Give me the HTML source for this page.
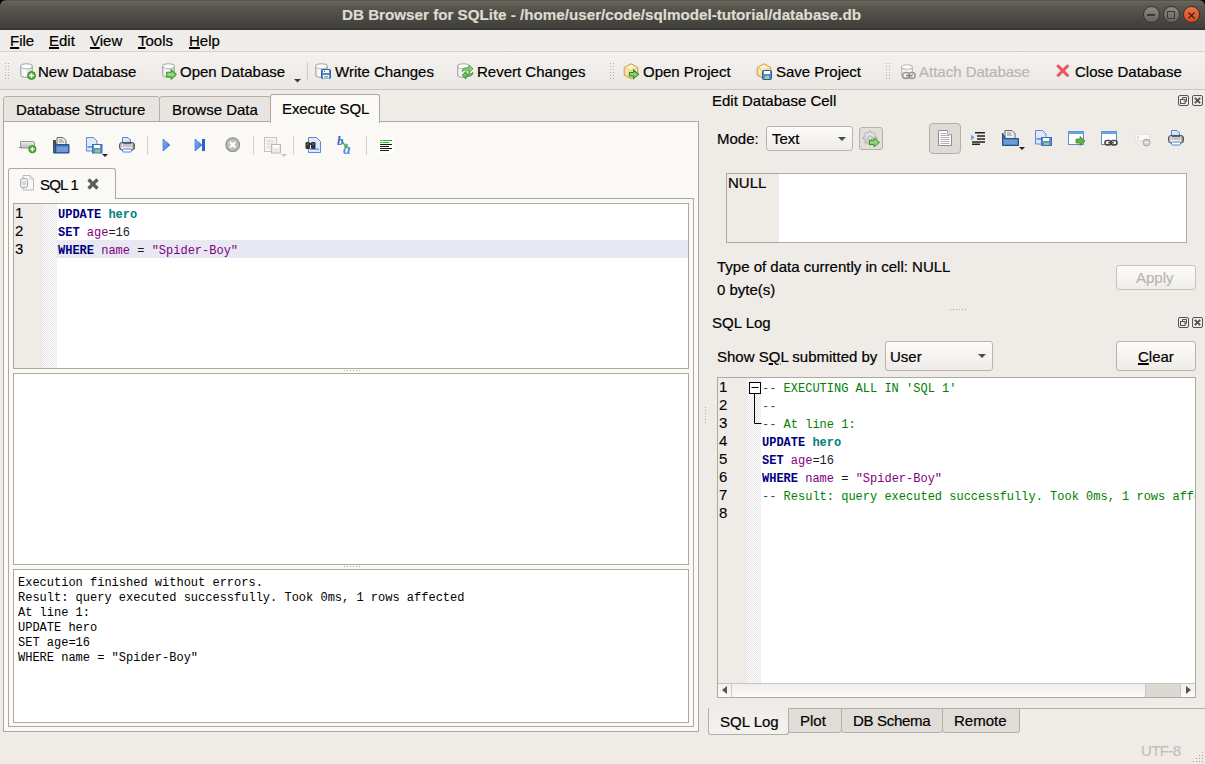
<!DOCTYPE html>
<html><head><meta charset="utf-8">
<style>
*{box-sizing:border-box;margin:0;padding:0}
html,body{width:1205px;height:764px;overflow:hidden;background:#000}
body{position:relative;font-family:"Liberation Sans",sans-serif;font-size:15px;color:#1a1a1a}
.a{position:absolute}
.t{position:absolute;white-space:pre;line-height:15px;font-size:15px;color:#000;-webkit-text-stroke:0.2px currentColor}
.m{position:absolute;white-space:pre;font-family:"Liberation Mono",monospace;font-size:12px;line-height:18px}
.u{text-decoration:underline;text-decoration-thickness:2px;text-underline-offset:1px}
.k{color:#00007f;font-weight:bold}
.tb{color:#007f7f;font-weight:bold}
.id{color:#7f007f}
.s{color:#7f007f}
.c{color:#007f00}
svg{position:absolute;overflow:visible}
</style></head><body>

<!-- title bar -->
<div class="a" style="left:0;top:0;width:1205px;height:30px;background:linear-gradient(#55534b 0,#55534b 1px,#6b685e 1px,#625f56 3px,#57554d 8px,#3f3e3a 28px,#33322e 29px);border-radius:6px 6px 0 0"></div>
<div class="a" style="left:0;top:30px;width:1205px;height:1px;background:#f8f6f3"></div>
<div class="t" style="left:342px;top:7px;color:#dfdbd2;font-weight:bold;font-size:15.2px">DB Browser for SQLite - /home/user/code/sqlmodel-tutorial/database.db</div>
<div class="a" style="left:1143px;top:6px;width:17px;height:17px;border-radius:50%;background:linear-gradient(#8a8984,#65645f);border:1px solid #34332f"></div>
<div class="a" style="left:1147px;top:14px;width:8px;height:2px;background:#3a3935"></div>
<div class="a" style="left:1163px;top:6px;width:17px;height:17px;border-radius:50%;background:linear-gradient(#8a8984,#65645f);border:1px solid #34332f"></div>
<div class="a" style="left:1167px;top:11px;width:8px;height:8px;border:1.5px solid #3a3935"></div>
<div class="a" style="left:1183px;top:6px;width:17px;height:17px;border-radius:50%;background:linear-gradient(#f07444,#d94a1c);border:1px solid #3a2e26"></div>
<svg style="left:1188px;top:12px" width="7" height="7"><path d="M0.5 0.5L6.5 6.5M6.5 0.5L0.5 6.5" stroke="#2a2a20" stroke-width="1.3"/></svg>

<!-- menu bar -->
<div class="a" style="left:0;top:30px;width:1205px;height:21px;background:#efedea"></div>
<div class="a" style="left:0;top:51px;width:1205px;height:1px;background:#d6d2cc"></div>
<div class="t" style="left:10px;top:33px"><span class="u">F</span>ile</div>
<div class="t" style="left:49px;top:33px"><span class="u">E</span>dit</div>
<div class="t" style="left:90px;top:33px"><span class="u">V</span>iew</div>
<div class="t" style="left:138px;top:33px"><span class="u">T</span>ools</div>
<div class="t" style="left:189px;top:33px"><span class="u">H</span>elp</div>

<!-- main toolbar -->
<div class="a" style="left:0;top:52px;width:1205px;height:37px;background:linear-gradient(#f4f2ef,#ebe8e4)"></div>
<div class="a" style="left:0;top:89px;width:1205px;height:1px;background:#c9c5bf"></div>
<div class="a" style="left:0;top:90px;width:1205px;height:1px;background:#f7f5f2"></div>


<!-- toolbar items -->
<svg style="left:5px;top:63px" width="4" height="17"><rect x="0" y="0" width="1" height="1" fill="#b3afa8"/><rect x="0" y="3" width="1" height="1" fill="#b3afa8"/><rect x="0" y="6" width="1" height="1" fill="#b3afa8"/><rect x="0" y="9" width="1" height="1" fill="#b3afa8"/><rect x="0" y="12" width="1" height="1" fill="#b3afa8"/><rect x="0" y="15" width="1" height="1" fill="#b3afa8"/><rect x="3" y="0" width="1" height="1" fill="#b3afa8"/><rect x="3" y="3" width="1" height="1" fill="#b3afa8"/><rect x="3" y="6" width="1" height="1" fill="#b3afa8"/><rect x="3" y="9" width="1" height="1" fill="#b3afa8"/><rect x="3" y="12" width="1" height="1" fill="#b3afa8"/><rect x="3" y="15" width="1" height="1" fill="#b3afa8"/></svg>
<svg style="left:20px;top:63px;opacity:1" width="14" height="15"><defs><linearGradient id="cg20" x1="0" x2="1"><stop offset="0" stop-color="#e8e8e8"/><stop offset=".35" stop-color="#fdfdfd"/><stop offset="1" stop-color="#d4d4d4"/></linearGradient></defs><path d="M.7 3.2v8.6c0 1.5 2.6 2.6 5.8 2.6s5.8-1.1 5.8-2.6V3.2" fill="url(#cg20)" stroke="#a9a9a9" stroke-width="1.1"/><ellipse cx="6.5" cy="3.2" rx="5.8" ry="2.5" fill="#fff" stroke="#a9a9a9" stroke-width="1.1"/><path d="M1.5 4.5c1 1 3 1.5 5 1.5s4-.5 5-1.5" fill="none" stroke="#d0d0d0" stroke-width=".8"/></svg>
<svg style="left:27px;top:71px" width="9" height="9"><circle cx="4.5" cy="4.5" r="3.9" fill="#5bb548" stroke="#2f8a25" stroke-width="1"/><path d="M4.5 2.3v4.4M2.3 4.5h4.4" stroke="#fff" stroke-width="1.4"/></svg>
<div class="t" style="left:38px;top:64px">New Database</div>
<svg style="left:162px;top:63px;opacity:1" width="14" height="15"><defs><linearGradient id="cg162" x1="0" x2="1"><stop offset="0" stop-color="#e8e8e8"/><stop offset=".35" stop-color="#fdfdfd"/><stop offset="1" stop-color="#d4d4d4"/></linearGradient></defs><path d="M.7 3.2v8.6c0 1.5 2.6 2.6 5.8 2.6s5.8-1.1 5.8-2.6V3.2" fill="url(#cg162)" stroke="#a9a9a9" stroke-width="1.1"/><ellipse cx="6.5" cy="3.2" rx="5.8" ry="2.5" fill="#fff" stroke="#a9a9a9" stroke-width="1.1"/><path d="M1.5 4.5c1 1 3 1.5 5 1.5s4-.5 5-1.5" fill="none" stroke="#d0d0d0" stroke-width=".8"/></svg>
<svg style="left:166px;top:69px" width="11" height="11"><path d="M.6 3.3h4.6V.8l5 4.7-5 4.7V7.7H.6z" fill="#9ad486" stroke="#2e9a1e" stroke-width="1.1" stroke-linejoin="round"/></svg>
<div class="t" style="left:180px;top:64px">Open Database</div>
<svg style="left:294px;top:79px" width="7" height="4"><path d="M0 0h7L3.5 3.5z" fill="#3c3c3c"/></svg>
<div class="a" style="left:307px;top:62px;width:1px;height:18px;background:#cfcbc5"></div>
<svg style="left:315px;top:63px;opacity:1" width="14" height="15"><defs><linearGradient id="cg315" x1="0" x2="1"><stop offset="0" stop-color="#e8e8e8"/><stop offset=".35" stop-color="#fdfdfd"/><stop offset="1" stop-color="#d4d4d4"/></linearGradient></defs><path d="M.7 3.2v8.6c0 1.5 2.6 2.6 5.8 2.6s5.8-1.1 5.8-2.6V3.2" fill="url(#cg315)" stroke="#a9a9a9" stroke-width="1.1"/><ellipse cx="6.5" cy="3.2" rx="5.8" ry="2.5" fill="#fff" stroke="#a9a9a9" stroke-width="1.1"/><path d="M1.5 4.5c1 1 3 1.5 5 1.5s4-.5 5-1.5" fill="none" stroke="#d0d0d0" stroke-width=".8"/></svg>
<svg style="left:321px;top:69px" width="10" height="10"><rect x=".5" y=".5" width="9" height="9" rx=".8" fill="#4f84d6" stroke="#2f63b8"/><rect x="2" y="1" width="6" height="3" fill="#fff"/><rect x="3" y="1.5" width="1" height="1.5" fill="#3a6fc8"/><rect x="2" y="6" width="6" height="3.5" fill="#fff"/><rect x="3" y="7" width="4" height="1.6" fill="#7cc83a"/></svg>
<div class="t" style="left:335px;top:64px">Write Changes</div>
<svg style="left:457px;top:63px;opacity:1" width="14" height="15"><defs><linearGradient id="cg457" x1="0" x2="1"><stop offset="0" stop-color="#e8e8e8"/><stop offset=".35" stop-color="#fdfdfd"/><stop offset="1" stop-color="#d4d4d4"/></linearGradient></defs><path d="M.7 3.2v8.6c0 1.5 2.6 2.6 5.8 2.6s5.8-1.1 5.8-2.6V3.2" fill="url(#cg457)" stroke="#a9a9a9" stroke-width="1.1"/><ellipse cx="6.5" cy="3.2" rx="5.8" ry="2.5" fill="#fff" stroke="#a9a9a9" stroke-width="1.1"/><path d="M1.5 4.5c1 1 3 1.5 5 1.5s4-.5 5-1.5" fill="none" stroke="#d0d0d0" stroke-width=".8"/></svg>
<svg style="left:461px;top:64px" width="13" height="16"><path d="M1 7.5c0-2.5 2-3.8 5-3.8h2V1l4 3.8L8 8.6V6H6c-2 0-3.5.3-5 1.5z" fill="#8fd07a" stroke="#3a9a2e" stroke-width=".8"/><path d="M12 8.5c0 2.5-2 3.8-5 3.8H5V15l-4-3.8L5 7.4V10h2c2 0 3.5-.3 5-1.5z" fill="#6fbf5a" stroke="#2e8a22" stroke-width=".8"/></svg>
<div class="t" style="left:477px;top:64px">Revert Changes</div>
<svg style="left:610px;top:63px" width="4" height="17"><rect x="0" y="0" width="1" height="1" fill="#b3afa8"/><rect x="0" y="3" width="1" height="1" fill="#b3afa8"/><rect x="0" y="6" width="1" height="1" fill="#b3afa8"/><rect x="0" y="9" width="1" height="1" fill="#b3afa8"/><rect x="0" y="12" width="1" height="1" fill="#b3afa8"/><rect x="0" y="15" width="1" height="1" fill="#b3afa8"/><rect x="3" y="0" width="1" height="1" fill="#b3afa8"/><rect x="3" y="3" width="1" height="1" fill="#b3afa8"/><rect x="3" y="6" width="1" height="1" fill="#b3afa8"/><rect x="3" y="9" width="1" height="1" fill="#b3afa8"/><rect x="3" y="12" width="1" height="1" fill="#b3afa8"/><rect x="3" y="15" width="1" height="1" fill="#b3afa8"/></svg>
<svg style="left:623px;top:63px" width="17" height="17"><defs><linearGradient id="bx" x1="0" y1="0" x2="0" y2="1"><stop offset="0" stop-color="#fff6d8"/><stop offset="1" stop-color="#f2d58a"/></linearGradient></defs><path d="M8 .8l6.8 3.7v7.6L8 15.8 1.2 12.1V4.5z" fill="url(#bx)" stroke="#c99a3a"/><path d="M1.2 4.5L8 8l6.8-3.5M8 8v7.8" fill="none" stroke="#e2bd6a" stroke-width=".8"/><path d="M6.5 9.5h4V7l5 4.3-5 4.3V13h-4z" fill="#8fd07a" stroke="#2f8a25" stroke-width="1.1"/></svg>
<div class="t" style="left:643px;top:64px">Open Project</div>
<svg style="left:756px;top:63px" width="17" height="17"><defs><linearGradient id="bx2" x1="0" y1="0" x2="0" y2="1"><stop offset="0" stop-color="#fff6d8"/><stop offset="1" stop-color="#f2d58a"/></linearGradient></defs><path d="M8 .8l6.8 3.7v7.6L8 15.8 1.2 12.1V4.5z" fill="url(#bx2)" stroke="#c99a3a"/><path d="M1.2 4.5L8 8l6.8-3.5M8 8v7.8" fill="none" stroke="#e2bd6a" stroke-width=".8"/><rect x="6.5" y="7.5" width="9" height="9" rx="1" fill="#5b8bd0" stroke="#2f5a9a"/><rect x="8" y="8" width="6" height="3" fill="#fff"/><rect x="9" y="13" width="4" height="3" fill="#9fd080"/></svg>
<div class="t" style="left:776px;top:64px">Save Project</div>
<svg style="left:886px;top:63px" width="4" height="17"><rect x="0" y="0" width="1" height="1" fill="#b3afa8"/><rect x="0" y="3" width="1" height="1" fill="#b3afa8"/><rect x="0" y="6" width="1" height="1" fill="#b3afa8"/><rect x="0" y="9" width="1" height="1" fill="#b3afa8"/><rect x="0" y="12" width="1" height="1" fill="#b3afa8"/><rect x="0" y="15" width="1" height="1" fill="#b3afa8"/><rect x="3" y="0" width="1" height="1" fill="#b3afa8"/><rect x="3" y="3" width="1" height="1" fill="#b3afa8"/><rect x="3" y="6" width="1" height="1" fill="#b3afa8"/><rect x="3" y="9" width="1" height="1" fill="#b3afa8"/><rect x="3" y="12" width="1" height="1" fill="#b3afa8"/><rect x="3" y="15" width="1" height="1" fill="#b3afa8"/></svg>
<svg style="left:901px;top:64px" width="16" height="16"><path d="M.6 3v8.5c0 1.4 2.5 2.4 5.4 2.4s5.4-1 5.4-2.4V3" fill="#f7f6f4" stroke="#bdbbb8" stroke-width="1.1"/><ellipse cx="6" cy="3" rx="5.4" ry="2.3" fill="#fcfcfb" stroke="#bdbbb8" stroke-width="1.1"/><rect x="1.8" y="8.6" width="6.5" height="6" rx="2.8" fill="none" stroke="#9a9896" stroke-width="1.5"/><rect x="7.6" y="8.6" width="6.5" height="6" rx="2.8" fill="none" stroke="#9a9896" stroke-width="1.5"/><path d="M5 11.6h6" stroke="#8a8886" stroke-width="1.6"/></svg>
<div class="t" style="left:919px;top:64px;color:#b9b6b1">Attach Database</div>
<svg style="left:1056px;top:64px" width="14" height="14"><path d="M1.3 1.3l11 11M12.3 1.3l-11 11" stroke="#f0505c" stroke-width="3"/></svg>
<div class="t" style="left:1075px;top:64px">Close Database</div>

<!-- main area bg -->
<div class="a" style="left:0;top:90px;width:1205px;height:674px;background:#efebe7"></div>

<!-- top tabs -->
<div class="a" style="left:3px;top:96px;width:157px;height:26px;background:#e8e5e1;border:1px solid #b3afa9;border-radius:3px 3px 0 0"></div>
<div class="t" style="left:16px;top:102px">Database Structure</div>
<div class="a" style="left:159px;top:96px;width:112px;height:26px;background:#e8e5e1;border:1px solid #b3afa9;border-radius:3px 3px 0 0"></div>
<div class="t" style="left:172px;top:102px">Browse Data</div>
<!-- left tab widget pane -->
<div class="a" style="left:3px;top:121px;width:696px;height:611px;background:#fbf9f6;border:1px solid #aca8a2"></div>
<div class="a" style="left:270px;top:94px;width:110px;height:29px;background:#fbf9f6;border:1px solid #aca8a2;border-bottom:none;border-radius:3px 3px 0 0"></div>
<div class="t" style="left:282px;top:101px;letter-spacing:-0.1px">Execute SQL</div>

<!-- sql toolbar -->
<svg style="left:19px;top:140px" width="18" height="14"><defs><linearGradient id="sl" x1="0" y1="0" x2="0" y2="1"><stop offset="0" stop-color="#f0f0f0"/><stop offset="1" stop-color="#b8b8b8"/></linearGradient></defs><path d="M1.5 1.5h12.5a1.5 1.5 0 0 1 1.5 1.5v3.5a1.5 1.5 0 0 1-1.5 1.5H1.5z" fill="url(#sl)" stroke="#999" stroke-width="1"/><path d="M0 7.5h3" stroke="#888"/><circle cx="13.4" cy="9.2" r="3.6" fill="#5bb548" stroke="#2f8a25" stroke-width="1"/><path d="M13.4 7.2v4M11.4 9.2h4" stroke="#fff" stroke-width="1.3"/></svg>
<svg style="left:53px;top:137px" width="17" height="17"><path d="M4 .5h6l3 3v4H4z" fill="#eee" stroke="#666"/><path d="M6 3h4M6 5h5" stroke="#777" stroke-width=".8"/><path d="M.5 3.5v12.5h15.5V7.5H3.5z" fill="#3a6fb8" stroke="#2a4e86"/><path d="M.5 3.5h2v12.5" fill="#555" stroke="#444"/><rect x="3.5" y="9.5" width="11.5" height="5.5" fill="#6f9ad8"/></svg>
<svg style="left:86px;top:137px" width="23" height="21"><path d="M.5 .5h7l3.5 3.5v10H.5z" fill="#dfe9f7" stroke="#5b8bd0"/><path d="M1.5 10h5" stroke="#6aa0e8" stroke-width="2"/><rect x="6.5" y="7.5" width="9.5" height="8.5" fill="#5b8bd0" stroke="#3a6fb8"/><rect x="8" y="8" width="6" height="3" fill="#fff"/><rect x="9" y="12.5" width="5" height="3" fill="#8fcf6a"/><path d="M16 17h6l-3 3z" fill="#222"/></svg>
<svg style="left:119px;top:137px" width="17" height="17"><defs><linearGradient id="pba" x1="0" x2="1"><stop offset="0" stop-color="#8a8a8a"/><stop offset=".2" stop-color="#f4f4f4"/><stop offset=".8" stop-color="#e8e8e8"/><stop offset="1" stop-color="#555"/></linearGradient><linearGradient id="ppa" x1="0" y1="0" x2="1" y2="1"><stop offset="0" stop-color="#eaf2fd"/><stop offset="1" stop-color="#b8d2f4"/></linearGradient></defs><path d="M3.5 .5h5.5l2.5 2.5v4.5h-8z" fill="url(#ppa)" stroke="#4a86d8"/><rect x=".5" y="5.5" width="15" height="7.5" rx="2.5" fill="url(#pba)" stroke="#555"/><rect x="3.5" y="7" width="9" height="3" fill="#c4c4c4"/><path d="M3.5 6.5h9" stroke="#666"/><rect x="3.5" y="12" width="9" height="3" rx="1" fill="#fff" stroke="#4a86d8"/></svg>
<div class="a" style="left:147px;top:136px;width:1px;height:19px;background:#d3cfc9"></div>
<svg style="left:162px;top:138px" width="9" height="14"><defs><linearGradient id="pl" x1="0" y1="0" x2="1" y2="1"><stop offset="0" stop-color="#8ab4f0"/><stop offset="1" stop-color="#2f6fd8"/></linearGradient></defs><path d="M1 1l7 6-7 6z" fill="url(#pl)" stroke="#3a72d0" stroke-width=".7"/></svg>
<svg style="left:194px;top:138px" width="12" height="14"><defs><linearGradient id="pl2" x1="0" y1="0" x2="1" y2="1"><stop offset="0" stop-color="#8ab4f0"/><stop offset="1" stop-color="#2f6fd8"/></linearGradient></defs><path d="M1 1l7 6-7 6z" fill="url(#pl2)" stroke="#3a72d0" stroke-width=".7"/><rect x="8" y="1" width="3" height="12" fill="#2f62c0"/></svg>
<svg style="left:225px;top:137px" width="16" height="16"><circle cx="7.7" cy="7.7" r="6.8" fill="#bdbdbd" stroke="#8f8f8f" stroke-width="1.2"/><path d="M5 5l5.4 5.4M10.4 5L5 10.4" stroke="#fff" stroke-width="2.2"/></svg>
<div class="a" style="left:253px;top:136px;width:1px;height:19px;background:#d3cfc9"></div>
<svg style="left:264px;top:137px;opacity:.55" width="24" height="21"><rect x=".5" y=".5" width="12" height="14" fill="#f6f6f6" stroke="#999"/><path d="M2 4h9M2 7h9M2 10h9M5 2v11M8 2v11" stroke="#bbb" stroke-width=".8"/><rect x="7.5" y="7.5" width="9" height="8.5" fill="#ddd" stroke="#888"/><rect x="9" y="8" width="6" height="3" fill="#fff"/><path d="M17 17h6l-3 3z" fill="#999"/></svg>
<div class="a" style="left:293px;top:136px;width:1px;height:19px;background:#d3cfc9"></div>
<svg style="left:305px;top:137px" width="17" height="17"><path d="M3.5 .5h8l4 4v11h-12z" fill="#dfe9f7" stroke="#5b8bd0"/><rect x="5" y="11.5" width="9" height="1.5" fill="#6aa0e8"/><rect x=".5" y="5" width="4.5" height="7" rx="1.2" fill="#333"/><rect x="6" y="5" width="4.5" height="7" rx="1.2" fill="#333"/><rect x="4" y="6" width="3" height="2" fill="#333"/><path d="M2 7h1.5M7.5 7H9" stroke="#999"/></svg>
<svg style="left:337px;top:136px" width="19" height="19"><text x="0" y="9" font-family="Liberation Serif" font-style="italic" font-weight="bold" font-size="13" fill="#2f6bd0">b</text><text x="6" y="17.5" font-family="Liberation Serif" font-style="italic" font-weight="bold" font-size="15" fill="#4f8ee8">a</text><path d="M5.5 6.5l4 4" stroke="#3aa53a" stroke-width="1.5"/><path d="M7 10.8h3v-3" fill="none" stroke="#3aa53a" stroke-width="1.3"/></svg>
<div class="a" style="left:366px;top:136px;width:1px;height:19px;background:#d3cfc9"></div>
<svg style="left:378px;top:137px" width="16" height="16"><rect x="0" y="0" width="16" height="16" fill="#fff"/><path d="M2 3.5h2.5M5 3.5h9M2 5.5h2.5M5 5.5h6" stroke="#22c022" stroke-width="1.2"/><path d="M2 7.5h12M2 9.5h9M2 11.5h12M2 13.5h9" stroke="#1a1a1a" stroke-width="1.2"/></svg>


<!-- SQL 1 tab + pane -->
<div class="a" style="left:8px;top:198px;width:686px;height:529px;background:#fbf9f6;border:1px solid #aca8a2"></div>
<div class="a" style="left:8px;top:168px;width:108px;height:31px;background:#fbf9f6;border:1px solid #aca8a2;border-bottom:none;border-radius:3px 3px 0 0"></div>
<svg style="left:20px;top:175px" width="16" height="16"><path d="M3 .5h7l3.5 3.5v11H3z" fill="#f7f7f7" stroke="#b8b8b8"/><path d="M10 .5v3.5h3.5" fill="none" stroke="#c8c8c8"/><rect x=".5" y="3.5" width="7" height="9" rx="2" fill="#eee" stroke="#a8a8a8"/><path d="M3 6v4M5 6v4" stroke="#c0c0c0"/></svg>
<div class="t" style="left:40px;top:177px;letter-spacing:-0.8px">SQL 1</div>
<svg style="left:86px;top:177px" width="14" height="14"><path d="M2.5 2.5l9 9M11.5 2.5l-9 9" stroke="#5c5c5c" stroke-width="3.2"/></svg>

<!-- editor -->
<div class="a" style="left:13px;top:203px;width:676px;height:166px;background:#fff;border:1px solid #aca8a2"></div>
<div class="a" style="left:14px;top:204px;width:29px;height:164px;background:#efebe7"></div>
<div class="a" style="left:43px;top:204px;width:14px;height:164px;background-color:#fff;background-image:linear-gradient(45deg,#e4e4e4 25%,transparent 25%,transparent 75%,#e4e4e4 75%),linear-gradient(45deg,#e4e4e4 25%,transparent 25%,transparent 75%,#e4e4e4 75%);background-size:2px 2px;background-position:0 0,1px 1px"></div>
<div class="a" style="left:57px;top:240px;width:631px;height:18px;background:#e8e8f2"></div>
<div class="m" style="left:15px;top:204px;font-family:'Liberation Sans',sans-serif;font-size:15px;color:#000;-webkit-text-stroke:0.1px #000">1
2
3</div>
<div class="m" style="left:58px;top:206px"><span class="k">UPDATE</span> <span class="tb">hero</span>
<span class="k">SET</span> <span class="id">age</span>=16
<span class="k">WHERE</span> <span class="id">name</span> = <span class="s">"Spider-Boy"</span></div>

<!-- results -->
<div class="a" style="left:13px;top:373px;width:676px;height:192px;background:#fff;border:1px solid #aca8a2"></div>
<svg style="left:344px;top:370px" width="16" height="1"><rect x="0" y="0" width="1" height="1" fill="#a9a59f"/><rect x="3" y="0" width="1" height="1" fill="#a9a59f"/><rect x="6" y="0" width="1" height="1" fill="#a9a59f"/><rect x="9" y="0" width="1" height="1" fill="#a9a59f"/><rect x="12" y="0" width="1" height="1" fill="#a9a59f"/><rect x="15" y="0" width="1" height="1" fill="#a9a59f"/></svg>

<!-- message -->
<div class="a" style="left:13px;top:569px;width:676px;height:154px;background:#fff;border:1px solid #aca8a2"></div>
<svg style="left:344px;top:566px" width="16" height="1"><rect x="0" y="0" width="1" height="1" fill="#a9a59f"/><rect x="3" y="0" width="1" height="1" fill="#a9a59f"/><rect x="6" y="0" width="1" height="1" fill="#a9a59f"/><rect x="9" y="0" width="1" height="1" fill="#a9a59f"/><rect x="12" y="0" width="1" height="1" fill="#a9a59f"/><rect x="15" y="0" width="1" height="1" fill="#a9a59f"/></svg>
<div class="m" style="left:18px;top:576px;line-height:15px;color:#000">Execution finished without errors.
Result: query executed successfully. Took 0ms, 1 rows affected
At line 1:
UPDATE hero
SET age=16
WHERE name = "Spider-Boy"</div>



<!-- ===== right dock: Edit Database Cell ===== -->
<div class="t" style="left:712px;top:93px">Edit Database Cell</div>
<svg style="left:1178px;top:95px" width="26" height="11"><rect x=".5" y=".5" width="10" height="10" rx="1.5" fill="none" stroke="#555"/><rect x="2.5" y="4.5" width="4.5" height="4" fill="none" stroke="#555"/><path d="M4.5 4.5v-2h4v4h-1.5" fill="none" stroke="#555"/><rect x="14.5" y=".5" width="10" height="10" rx="1.5" fill="none" stroke="#555"/><path d="M16.8 2.8l5.4 5.4M22.2 2.8l-5.4 5.4" stroke="#505050" stroke-width="1.8"/></svg>
<div class="t" style="left:717px;top:131px">Mode:</div>
<div class="a" style="left:766px;top:126px;width:87px;height:25px;border:1px solid #b8b3ad;border-radius:3px;background:linear-gradient(#fdfcfb,#eeebe8)"></div>
<div class="t" style="left:772px;top:131px">Text</div>
<svg style="left:838px;top:137px" width="8" height="4"><path d="M0 0h8L4 4z" fill="#4a4a4a"/></svg>
<div class="a" style="left:859px;top:127px;width:24px;height:23px;border:1px solid #b5b0aa;border-radius:3px;background:#e2ded9"></div>
<svg style="left:863px;top:131px" width="18" height="17"><defs><linearGradient id="gg" x1="0" y1="0" x2="0" y2="1"><stop offset="0" stop-color="#f4f4f4"/><stop offset="1" stop-color="#c4c4c4"/></linearGradient></defs><path d="M12.17 5.84 L13.94 6.09 L13.94 7.91 L12.17 8.16 L11.48 9.84 L12.55 11.27 L11.27 12.55 L9.84 11.48 L8.16 12.17 L7.91 13.94 L6.09 13.94 L5.84 12.17 L4.16 11.48 L2.73 12.55 L1.45 11.27 L2.52 9.84 L1.83 8.16 L0.06 7.91 L0.06 6.09 L1.83 5.84 L2.52 4.16 L1.45 2.73 L2.73 1.45 L4.16 2.52 L5.84 1.83 L6.09 0.06 L7.91 0.06 L8.16 1.83 L9.84 2.52 L11.27 1.45 L12.55 2.73 L11.48 4.16Z" fill="url(#gg)" stroke="#a0a0a0" stroke-width=".8"/><circle cx="7" cy="7" r="2.3" fill="#e0e0e0" stroke="#a0a0a0" stroke-width=".8"/><path d="M6.5 9.3h4.5V6.8l5.5 4.6-5.5 4.6v-2.5H6.5z" fill="#8fd07a" stroke="#2e9a1e" stroke-width="1" stroke-linejoin="round"/></svg>
<div class="a" style="left:929px;top:123px;width:32px;height:31px;border:1px solid #b3aea8;border-radius:4px;background:#dedad5"></div>
<svg style="left:938px;top:130px" width="15" height="17"><path d="M.5 .5h9l4 4v11H.5z" fill="#fff" stroke="#8c8c8c"/><path d="M9.5 .5v4h4" fill="#eee" stroke="#aaa"/><path d="M2.5 3.5h6M2.5 5.5h9M2.5 7.5h9M2.5 9.5h9M2.5 11.5h9M2.5 13.5h9" stroke="#b0b0b0" stroke-width="1"/></svg>
<svg style="left:971px;top:132px" width="14" height="13"><path d="M4 .8h10M6 4h8M6 7h8M1 10h13M1 12.3h8" stroke="#222" stroke-width="1.4"/><path d="M0 2.5l3.5 3-3.5 3" fill="#6aa0e8"/><path d="M0 5.5h3" stroke="#6aa0e8"/></svg>
<svg style="left:1002px;top:130px" width="24" height="21"><path d="M3 .5h7l3 3v6H3z" fill="#eee" stroke="#666"/><path d="M5 3h4M5 5h5" stroke="#777" stroke-width=".8"/><path d="M.5 3v12.5h16V8.5H3.5z" fill="#3a6fb8" stroke="#2a4e86"/><rect x="1.5" y="9.5" width="14" height="5" fill="#6f9ad8"/><path d="M17 17h6l-3 3z" fill="#222"/></svg>
<svg style="left:1035px;top:130px" width="17" height="16"><path d="M.5 .5h7l3.5 3.5v10H.5z" fill="#dfe9f7" stroke="#5b8bd0"/><path d="M1.5 9h5" stroke="#6aa0e8" stroke-width="2"/><rect x="6.5" y="7.5" width="10" height="8" fill="#5b8bd0" stroke="#3a6fb8"/><rect x="8" y="8" width="6" height="3" fill="#fff"/><rect x="9" y="12.5" width="5" height="2.5" fill="#8fcf6a"/></svg>
<svg style="left:1068px;top:131px" width="18" height="16"><rect x=".5" y=".5" width="15" height="13" fill="#fff" stroke="#5b8bd0"/><rect x=".5" y=".5" width="15" height="2.5" fill="#6aa0e8"/><path d="M8 8h4V5.5l5 4.5-5 4.5V12H8z" fill="#5db343" stroke="#34802a" stroke-width=".7"/></svg>
<svg style="left:1101px;top:131px" width="18" height="16"><rect x=".5" y=".5" width="15" height="13" fill="#fff" stroke="#5b8bd0"/><rect x=".5" y=".5" width="15" height="2.5" fill="#6aa0e8"/><rect x="4" y="9.5" width="6" height="4.5" rx="2.2" fill="none" stroke="#444" stroke-width="1.6"/><rect x="10" y="9.5" width="6" height="4.5" rx="2.2" fill="none" stroke="#444" stroke-width="1.6"/><path d="M7 11.8h6" stroke="#444" stroke-width="1.4"/></svg>
<svg style="left:1135px;top:134px" width="17" height="13"><rect x=".5" y=".5" width="14" height="6" fill="#fbfaf8" stroke="#e6e4e0"/><path d="M3 2v3" stroke="#bbb"/><circle cx="11.5" cy="8.5" r="3.5" fill="#ccc" stroke="#aaa"/><path d="M9.5 8.5h4" stroke="#fff" stroke-width="1.2"/></svg>
<svg style="left:1168px;top:130px" width="17" height="17"><defs><linearGradient id="pbb" x1="0" x2="1"><stop offset="0" stop-color="#8a8a8a"/><stop offset=".2" stop-color="#f4f4f4"/><stop offset=".8" stop-color="#e8e8e8"/><stop offset="1" stop-color="#555"/></linearGradient><linearGradient id="ppb" x1="0" y1="0" x2="1" y2="1"><stop offset="0" stop-color="#eaf2fd"/><stop offset="1" stop-color="#b8d2f4"/></linearGradient></defs><path d="M3.5 .5h5.5l2.5 2.5v4.5h-8z" fill="url(#ppb)" stroke="#4a86d8"/><rect x=".5" y="5.5" width="15" height="7.5" rx="2.5" fill="url(#pbb)" stroke="#555"/><rect x="3.5" y="7" width="9" height="3" fill="#c4c4c4"/><path d="M3.5 6.5h9" stroke="#666"/><rect x="3.5" y="12" width="9" height="3" rx="1" fill="#fff" stroke="#4a86d8"/></svg>

<div class="a" style="left:726px;top:173px;width:461px;height:70px;background:#fff;border:1px solid #aca8a2"></div>
<div class="a" style="left:727px;top:174px;width:52px;height:68px;background:#efebe7"></div>
<div class="t" style="left:728px;top:175px">NULL</div>
<div class="t" style="left:717px;top:259px">Type of data currently in cell: NULL</div>
<div class="t" style="left:717px;top:282px">0 byte(s)</div>
<div class="a" style="left:1116px;top:265px;width:80px;height:25px;border:1px solid #c6c2bc;border-radius:3px;background:linear-gradient(#fdfcfb,#efedea)"></div>
<div class="t" style="left:1136px;top:270px;color:#b9b6b1">Apply</div>
<svg style="left:950px;top:309px" width="16" height="1"><rect x="0" y="0" width="1" height="1" fill="#a9a59f"/><rect x="3" y="0" width="1" height="1" fill="#a9a59f"/><rect x="6" y="0" width="1" height="1" fill="#a9a59f"/><rect x="9" y="0" width="1" height="1" fill="#a9a59f"/><rect x="12" y="0" width="1" height="1" fill="#a9a59f"/><rect x="15" y="0" width="1" height="1" fill="#a9a59f"/></svg>

<!-- ===== SQL Log ===== -->
<div class="t" style="left:712px;top:315px">SQL Log</div>
<svg style="left:1178px;top:317px" width="26" height="11"><rect x=".5" y=".5" width="10" height="10" rx="1.5" fill="none" stroke="#555"/><rect x="2.5" y="4.5" width="4.5" height="4" fill="none" stroke="#555"/><path d="M4.5 4.5v-2h4v4h-1.5" fill="none" stroke="#555"/><rect x="14.5" y=".5" width="10" height="10" rx="1.5" fill="none" stroke="#555"/><path d="M16.8 2.8l5.4 5.4M22.2 2.8l-5.4 5.4" stroke="#505050" stroke-width="1.8"/></svg>
<div class="t" style="left:717px;top:349px">Show S<span class="u">Q</span>L submitted by</div>
<div class="a" style="left:885px;top:341px;width:108px;height:30px;border:1px solid #b8b3ad;border-radius:3px;background:linear-gradient(#fdfcfb,#eeebe8)"></div>
<div class="t" style="left:890px;top:349px">User</div>
<svg style="left:978px;top:354px" width="8" height="4"><path d="M0 0h8L4 4z" fill="#4a4a4a"/></svg>
<div class="a" style="left:1116px;top:341px;width:80px;height:30px;border:1px solid #b8b3ad;border-radius:3px;background:linear-gradient(#fdfcfb,#eeebe8)"></div>
<div class="t" style="left:1138px;top:349px"><span class="u">C</span>lear</div>
<svg style="left:705px;top:407px" width="1" height="16"><rect x="0" y="0" width="1" height="1" fill="#a9a59f"/><rect x="0" y="3" width="1" height="1" fill="#a9a59f"/><rect x="0" y="6" width="1" height="1" fill="#a9a59f"/><rect x="0" y="9" width="1" height="1" fill="#a9a59f"/><rect x="0" y="12" width="1" height="1" fill="#a9a59f"/><rect x="0" y="15" width="1" height="1" fill="#a9a59f"/></svg>

<div class="a" style="left:717px;top:377px;width:479px;height:321px;background:#fff;border:1px solid #aca8a2"></div>
<div class="a" style="left:718px;top:378px;width:29px;height:305px;background:#efebe7"></div>
<div class="a" style="left:747px;top:378px;width:14px;height:305px;background-color:#fff;background-image:linear-gradient(45deg,#e4e4e4 25%,transparent 25%,transparent 75%,#e4e4e4 75%),linear-gradient(45deg,#e4e4e4 25%,transparent 25%,transparent 75%,#e4e4e4 75%);background-size:2px 2px;background-position:0 0,1px 1px"></div>
<div class="m" style="left:719px;top:378px;font-family:'Liberation Sans',sans-serif;font-size:15px;color:#000;-webkit-text-stroke:0.1px #000">1
2
3
4
5
6
7
8</div>
<svg style="left:749px;top:382px" width="13" height="46"><rect x=".5" y=".5" width="11" height="11" fill="#fff" stroke="#000"/><path d="M2.5 5.5h7" stroke="#000"/><path d="M5.5 12v29.5h7" fill="none" stroke="#000"/></svg>
<div class="a" style="left:762px;top:378px;width:433px;height:305px;overflow:hidden">
<div class="m" style="left:0;top:2px"><span class="c">-- EXECUTING ALL IN 'SQL 1'
--
-- At line 1:</span>
<span class="k">UPDATE</span> <span class="tb">hero</span>
<span class="k">SET</span> <span class="id">age</span>=16
<span class="k">WHERE</span> <span class="id">name</span> = <span class="s">"Spider-Boy"</span>
<span class="c">-- Result: query executed successfully. Took 0ms, 1 rows affected</span></div>
</div>
<!-- scrollbar -->
<div class="a" style="left:718px;top:683px;width:477px;height:14px;background:linear-gradient(#f1efec,#fcfbfa);border-top:1px solid #c9c5bf"></div>
<svg style="left:722px;top:686px" width="5" height="8"><path d="M5 0v8L0 4z" fill="#555"/></svg>
<div class="a" style="left:731px;top:684px;width:1px;height:13px;background:#cfcbc5"></div>
<div class="a" style="left:1145px;top:684px;width:36px;height:13px;background:#dcd9d5;border-left:1px solid #c9c5bf;border-right:1px solid #c9c5bf"></div>
<svg style="left:1186px;top:686px" width="5" height="8"><path d="M0 0v8L5 4z" fill="#555"/></svg>

<!-- bottom tabs -->
<div class="a" style="left:708px;top:708px;width:497px;height:1px;background:#b3afa9"></div>
<div class="a" style="left:788px;top:708px;width:54px;height:25px;background:#e0ddd8;border:1px solid #b3afa9;border-radius:0 0 3px 3px"></div>
<div class="t" style="left:800px;top:713px">Plot</div>
<div class="a" style="left:841px;top:708px;width:102px;height:25px;background:#e0ddd8;border:1px solid #b3afa9;border-radius:0 0 3px 3px"></div>
<div class="t" style="left:853px;top:713px;letter-spacing:-0.3px">DB Schema</div>
<div class="a" style="left:942px;top:708px;width:78px;height:25px;background:#e0ddd8;border:1px solid #b3afa9;border-radius:0 0 3px 3px"></div>
<div class="t" style="left:954px;top:713px">Remote</div>
<div class="a" style="left:708px;top:708px;width:81px;height:27px;background:linear-gradient(#efece8,#f4f2ef);border:1px solid #b3afa9;border-top:none;border-radius:0 0 3px 3px"></div>
<div class="t" style="left:720px;top:714px">SQL Log</div>

<!-- status -->
<div class="t" style="left:1141px;top:743px;color:#c2bfba;letter-spacing:-0.6px">UTF-8</div>
<svg style="left:1193px;top:752px" width="10" height="10"><rect x="9" y="0" width="1" height="1" fill="#9d9993"/><rect x="6" y="3" width="1" height="1" fill="#9d9993"/><rect x="9" y="3" width="1" height="1" fill="#9d9993"/><rect x="3" y="6" width="1" height="1" fill="#9d9993"/><rect x="6" y="6" width="1" height="1" fill="#9d9993"/><rect x="9" y="6" width="1" height="1" fill="#9d9993"/><rect x="0" y="9" width="1" height="1" fill="#9d9993"/><rect x="3" y="9" width="1" height="1" fill="#9d9993"/><rect x="6" y="9" width="1" height="1" fill="#9d9993"/><rect x="9" y="9" width="1" height="1" fill="#9d9993"/></svg>

</body></html>
